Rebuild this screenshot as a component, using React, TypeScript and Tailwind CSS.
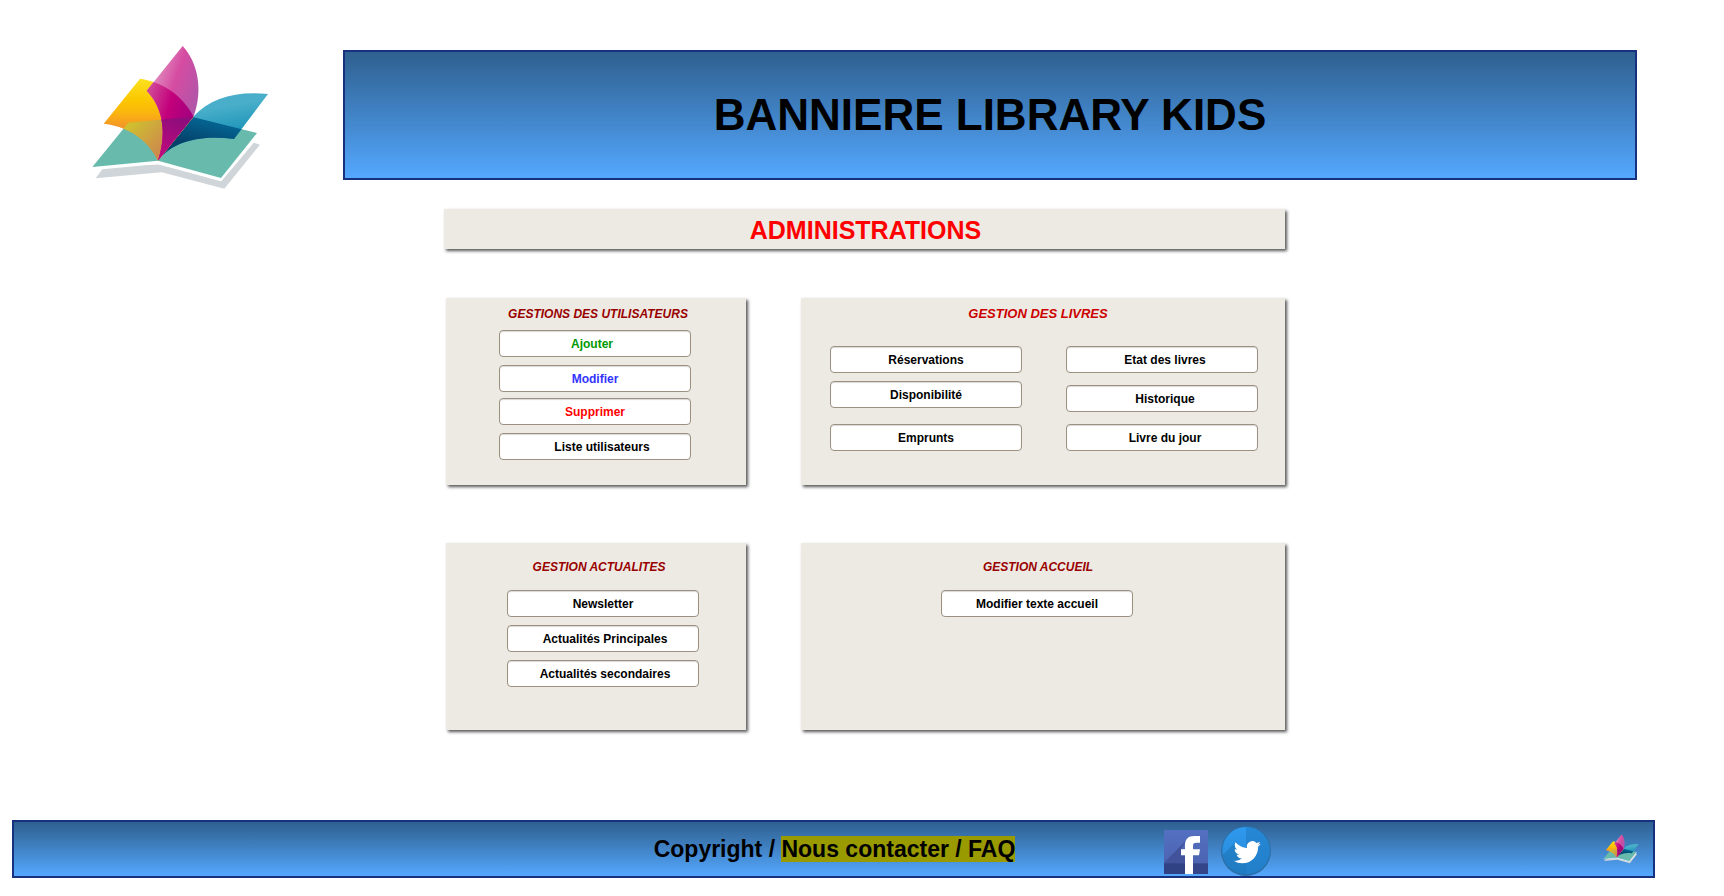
import { useId, type ReactNode } from "react";

const TEAL = "M67 411 L175 278 L365 260 L561 309 L453 444 L264 392 Z";
const YELLOW = "M101 281 L210 146 C285 158 340 200 371 260 L264 392 C240 340 190 292 101 281 Z";
const PINK = "M230 182 L338 48 C384 98 400 180 371 259 L264 392 C288 320 285 240 230 182 Z";
const BLUE = "M264 392 L371 259 C420 204 500 182 594 192 L492 327 C400 315 310 330 264 392 Z";

function BookLogo({ className }: { className: string }) {
  const id = useId();
  return (
    <svg viewBox="60 42 540 444" className={className} role="img" aria-label="Library Kids">
      <defs>
        <clipPath id={`${id}t`}>
          <path d={TEAL} />
        </clipPath>
        <clipPath id={`${id}y`}>
          <path d={YELLOW} />
        </clipPath>
        <linearGradient id={`${id}gy`} x1="0" y1="0" x2="0" y2="1" gradientUnits="objectBoundingBox">
          <stop offset="0" stopColor="#fbe122" />
          <stop offset="0.25" stopColor="#fbc800" />
          <stop offset="0.4" stopColor="#fbb80c" />
          <stop offset="0.6" stopColor="#f3942a" />
        </linearGradient>
        <linearGradient id={`${id}gm`} gradientUnits="userSpaceOnUse" x1="165" y1="280" x2="275" y2="380">
          <stop offset="0" stopColor="#cfc62c" />
          <stop offset="1" stopColor="#cd8450" />
        </linearGradient>
        <linearGradient id={`${id}gp`} gradientUnits="userSpaceOnUse" x1="240" y1="130" x2="388" y2="180">
          <stop offset="0" stopColor="#e29bc4" />
          <stop offset="0.5" stopColor="#d64ca2" />
          <stop offset="1" stopColor="#b355a8" />
        </linearGradient>
        <linearGradient id={`${id}gr`} gradientUnits="userSpaceOnUse" x1="235" y1="200" x2="365" y2="240">
          <stop offset="0" stopColor="#cf4596" />
          <stop offset="0.5" stopColor="#c3007b" />
          <stop offset="1" stopColor="#a5007f" />
        </linearGradient>
        <linearGradient id={`${id}gv`} gradientUnits="userSpaceOnUse" x1="320" y1="265" x2="270" y2="385">
          <stop offset="0" stopColor="#8f0c7c" />
          <stop offset="1" stopColor="#c20a7c" />
        </linearGradient>
        <linearGradient id={`${id}gb`} gradientUnits="userSpaceOnUse" x1="480" y1="190" x2="500" y2="310">
          <stop offset="0.3" stopColor="#48aec9" />
          <stop offset="1" stopColor="#1b93b8" />
        </linearGradient>
        <linearGradient id={`${id}gd`} gradientUnits="userSpaceOnUse" x1="400" y1="265" x2="380" y2="350">
          <stop offset="0" stopColor="#056593" />
          <stop offset="1" stopColor="#044068" />
        </linearGradient>
      </defs>
      <path d="M97 418 L264 402 L450 453 L545 336 L570 344 L463 476 L275 427 L77 445 Z" fill="#d0d5d9" />
      <path d="M67 411 L264 392 L453 444 L561 309 L556 330 L454 451 L264 401 Z" fill="#fff" stroke="#fff" strokeWidth="4" />
      <path d={TEAL} fill="#68bbac" />
      <path d={BLUE} fill={`url(#${id}gb)`} />
      <g clipPath={`url(#${id}t)`}>
        <path d={BLUE} fill={`url(#${id}gd)`} />
      </g>
      <path d={YELLOW} fill={`url(#${id}gy)`} />
      <g clipPath={`url(#${id}t)`}>
        <path d={YELLOW} fill={`url(#${id}gm)`} />
      </g>
      <path d={PINK} fill={`url(#${id}gp)`} />
      <g clipPath={`url(#${id}y)`}>
        <path d={PINK} fill={`url(#${id}gr)`} />
        <g clipPath={`url(#${id}t)`}>
          <path d={PINK} fill={`url(#${id}gv)`} />
        </g>
      </g>
    </svg>
  );
}

function FacebookIcon() {
  return (
    <svg viewBox="0 0 132 132" className="size-11">
      <defs>
        <linearGradient id="fb-fill" x1="0" y1="0" x2="0" y2="1">
          <stop offset="0" stopColor="#5470c2" />
          <stop offset="1" stopColor="#4a60ac" />
        </linearGradient>
      </defs>
      <rect width="132" height="132" fill="url(#fb-fill)" />
      <path d="M70 28 L0 98 V132 H63 V76 H51 V58 Z" fill="#42539b" />
      <rect y="100" width="132" height="32" fill="#2c3c7c" opacity="0.75" />
      <path
        d="M63 132 V76 H51 V58 H63 V46 C63 28 72 18 91 18 H108 V38 H97 C90 38 87 41 87 48 V58 H108 L105 76 H87 V132 Z"
        fill="#fff"
      />
    </svg>
  );
}

function TwitterIcon() {
  return (
    <svg viewBox="0 0 150 150" className="size-[50px]">
      <defs>
        <clipPath id="tw-disc">
          <circle cx="75" cy="74" r="71" />
        </clipPath>
        <linearGradient id="tw-fill" x1="0" y1="0" x2="0" y2="1">
          <stop offset="0" stopColor="#2f9af0" />
          <stop offset="1" stopColor="#2685cf" />
        </linearGradient>
      </defs>
      <circle cx="75" cy="75" r="75" fill="#2b6fa8" />
      <g clipPath="url(#tw-disc)">
        <rect width="150" height="150" fill="url(#tw-fill)" />
        <path d="M75 0 H150 V150 H75 Z" fill="#1f7cc4" opacity="0.6" />
        <path d="M45 47 L0 92 V150 H75 V112 Z" fill="#1c74b8" opacity="0.6" />
      </g>
      <g transform="translate(38 38) scale(3.4)">
        <path
          fill="#fff"
          d="M23.953 4.57a10 10 0 01-2.825.775 4.958 4.958 0 002.163-2.723c-.951.555-2.005.959-3.127 1.184a4.92 4.92 0 00-8.384 4.482C7.69 8.095 4.067 6.13 1.64 3.162a4.822 4.822 0 00-.666 2.475c0 1.71.87 3.213 2.188 4.096a4.904 4.904 0 01-2.228-.616v.06a4.923 4.923 0 003.946 4.827 4.996 4.996 0 01-2.212.085 4.936 4.936 0 004.604 3.417 9.867 9.867 0 01-6.102 2.105c-.39 0-.779-.023-1.17-.067a13.995 13.995 0 007.557 2.209c9.053 0 13.998-7.496 13.998-13.985 0-.21 0-.42-.015-.63A9.935 9.935 0 0024 4.59z"
        />
      </g>
    </svg>
  );
}

function ActionButton({ children, className = "" }: { children: ReactNode; className?: string }) {
  return (
    <button
      type="button"
      className={`h-[27px] w-48 rounded border border-[#9c9080] bg-white text-center text-xs font-bold shadow-[inset_0_1px_1px_#d9d9d9] ${className}`}
    >
      {children}
    </button>
  );
}

function Card({ children, className }: { children: ReactNode; className: string }) {
  return (
    <section
      className={`flex min-h-[187px] flex-col items-center bg-[#edeae3] shadow-[2px_2px_3px_#555] ${className}`}
    >
      {children}
    </section>
  );
}

export default function App() {
  return (
    <div className="bg-white pb-[18px] font-['Liberation_Sans',Arial,sans-serif] text-black">
      <header className="flex items-start pt-11 pr-[87px] pl-[90px]">
        <BookLogo className="h-[148px] w-[180px] shrink-0" />
        <div className="mt-1.5 ml-[73px] flex h-[130px] flex-1 items-center justify-center border-2 border-[#18317f] bg-linear-to-b from-[#2f6090] to-[#54a8ff]">
          <h1 className="text-[44px] leading-none font-bold">BANNIERE LIBRARY KIDS</h1>
        </div>
      </header>

      <main className="mt-[17px] pl-[5px]">
        <div className="mx-auto max-w-[841px]">
          <h2 className="flex h-10 items-center justify-center bg-[#edeae3] pt-0.5 pl-0.5 text-[25px] leading-none font-bold text-[#ff0000] shadow-[2px_2px_3px_#555]">
            ADMINISTRATIONS
          </h2>

          <div className="mt-[49px] grid grid-cols-[300fr_484fr] gap-x-[55px] gap-y-[58px] pl-[2px]">
            <Card className="pt-2 pr-0.5">
              <h3 className="pl-1.5 text-xs font-bold text-[#990000] italic">GESTIONS DES UTILISATEURS</h3>
              <ActionButton className="mt-2 pr-1.5 text-[#009900]">Ajouter</ActionButton>
              <ActionButton className="mt-2 text-[#3333ff]">Modifier</ActionButton>
              <ActionButton className="mt-1.5 text-[#ff0000]">Supprimer</ActionButton>
              <ActionButton className="mt-2 pl-3.5">Liste utilisateurs</ActionButton>
            </Card>

            <Card className="pt-2 pl-0.5">
              <h3 className="pr-3 text-[13px] leading-4 font-bold text-[#cc0000] italic">GESTION DES LIVRES</h3>
              <div className="mt-6 flex gap-11">
                <div className="flex flex-col">
                  <ActionButton>Réservations</ActionButton>
                  <ActionButton className="mt-2">Disponibilité</ActionButton>
                  <ActionButton className="mt-4">Emprunts</ActionButton>
                </div>
                <div className="flex flex-col gap-3">
                  <ActionButton className="pl-1.5">Etat des livres</ActionButton>
                  <ActionButton className="pl-1.5">Historique</ActionButton>
                  <ActionButton className="pl-1.5">Livre du jour</ActionButton>
                </div>
              </div>
            </Card>

            <Card className="pt-4">
              <h3 className="pl-1.5 text-xs font-bold text-[#990000] italic">GESTION ACTUALITES</h3>
              <div className="mt-[15px] flex flex-col gap-2 pl-3.5">
                <ActionButton>Newsletter</ActionButton>
                <ActionButton className="pl-1">Actualités Principales</ActionButton>
                <ActionButton className="pl-1">Actualités secondaires</ActionButton>
              </div>
            </Card>

            <Card className="pt-4 pr-3">
              <h3 className="pl-0.5 text-xs font-bold text-[#990000] italic">GESTION ACCUEIL</h3>
              <ActionButton className="mt-[15px]">Modifier texte accueil</ActionButton>
            </Card>
          </div>
        </div>
      </main>

      <footer className="mt-[90px] mr-[69px] ml-3 grid h-[58px] grid-cols-[1fr_auto_1fr] items-center border-2 border-[#18317f] bg-linear-to-b from-[#2f6090] to-[#54a8ff] pl-0.5">
        <p className="col-start-2 text-[23px] leading-none font-bold">
          Copyright /{" "}
          <a href="#contact" className="bg-[#999900]">
            Nous contacter / FAQ
          </a>
        </p>
        <div className="flex items-center pr-3.5 pl-[149px]">
          <a href="#facebook" aria-label="Facebook" className="pt-1.5">
            <FacebookIcon />
          </a>
          <a href="#twitter" aria-label="Twitter" className="ml-[13px] pt-1">
            <TwitterIcon />
          </a>
          <a href="#accueil" aria-label="Accueil" className="ml-auto">
            <BookLogo className="h-[30px] w-9" />
          </a>
        </div>
      </footer>
    </div>
  );
}
